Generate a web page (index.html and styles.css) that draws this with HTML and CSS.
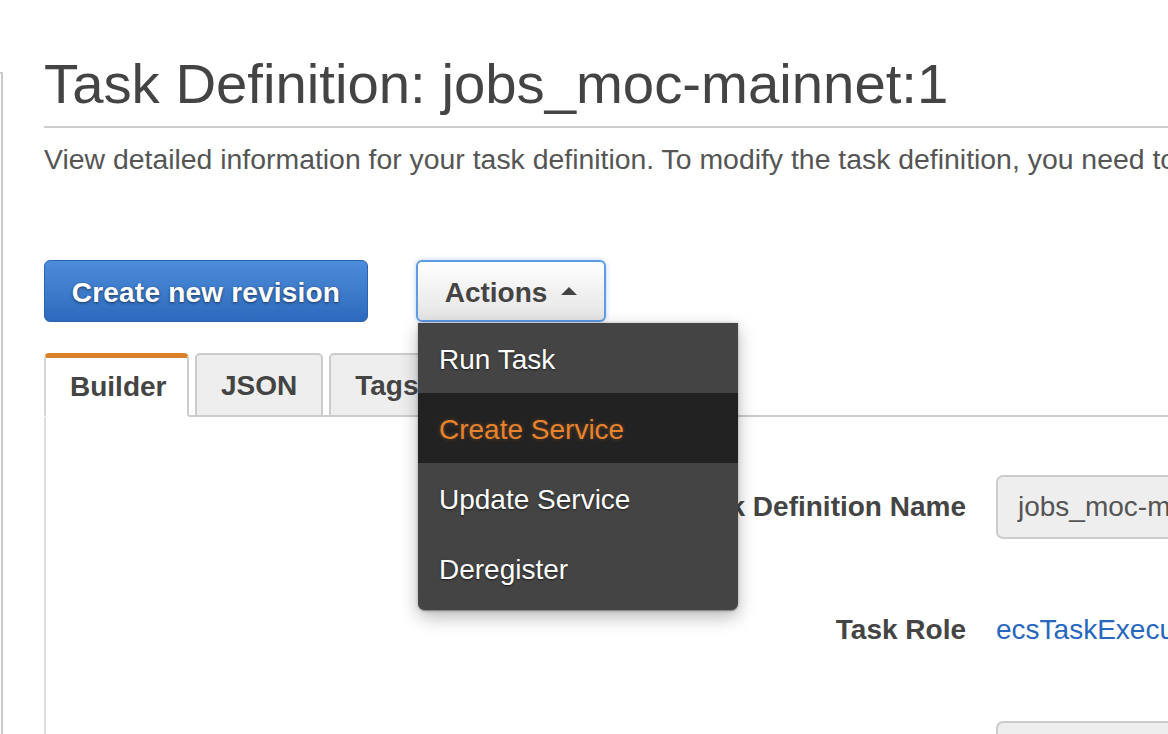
FILE: index.html
```html
<!DOCTYPE html>
<html lang="en">
<head>
<meta charset="utf-8">
<title>Task Definition</title>
<link rel="stylesheet" href="styles.css">
</head>
<body>
<div class="page">
  <div class="rail"></div>
  <main class="main">
    <h1 class="title">Task Definition: jobs_moc-mainnet:1</h1>
    <hr class="rule">
    <p class="subtitle">View detailed information for your task definition. To modify the task definition, you need to create a new revision.</p>

    <div class="actions-row">
      <button class="btn btn-primary">Create new revision</button>
      <div class="dropdown">
        <button class="btn btn-default">Actions <span class="caret-up"></span></button>
        <ul class="menu">
          <li class="menu-item">Run Task</li>
          <li class="menu-item is-hover">Create Service</li>
          <li class="menu-item">Update Service</li>
          <li class="menu-item">Deregister</li>
        </ul>
      </div>
    </div>

    <div class="tabs">
      <div class="tab is-active">Builder</div>
      <div class="tab">JSON</div>
      <div class="tab">Tags</div>
    </div>

    <section class="panel">
      <div class="form-grid">
        <div class="label">Task Definition Name</div>
        <div class="value"><div class="field">jobs_moc-mainnet</div></div>
        <div class="label">Task Role</div>
        <div class="value"><a class="link" href="#">ecsTaskExecutionRole</a></div>
        <div class="label"></div>
        <div class="value"><div class="field"></div></div>
      </div>
    </section>
  </main>
</div>
</body>
</html>
```

FILE: styles.css
```css
html, body {
  margin: 0;
  padding: 0;
  background: #fff;
  overflow: hidden;
  width: 1168px;
  height: 734px;
}

body {
  font-family: "Liberation Sans", Arial, Helvetica, sans-serif;
  color: #444;
}

.page {
  display: flex;
  align-items: flex-start;
  height: 734px;
}

.rail {
  flex: 0 0 auto;
  width: 1px;
  margin-top: 72px;
  height: 700px;
  border-top: 2px solid #cfcfcf;
  border-right: 2px solid #c8c8c8;
}

.main {
  flex: 1 1 auto;
  min-width: 0;
  padding-left: 41px;
}

.title {
  margin: 52px 0 0;
  font-size: 56.3px;
  line-height: 1.15;
  font-weight: normal;
  color: #444;
  white-space: nowrap;
}

.rule {
  margin: 9px 0 0;
  border: 0;
  height: 2px;
  background: #cccccc;
}

.subtitle {
  margin: 14px 0 0;
  font-size: 28.4px;
  line-height: 1.2;
  color: #555;
  white-space: nowrap;
}

.actions-row {
  display: flex;
  gap: 48px;
  margin-top: 84px;
}

.btn {
  font-family: "Liberation Sans", Arial, Helvetica, sans-serif;
  font-size: 28px;
  font-weight: bold;
  height: 62px;
  box-sizing: border-box;
  border-radius: 6px;
  padding: 5px 0 0;
  cursor: pointer;
}

.btn-primary {
  width: 324px;
  color: #fff;
  background: linear-gradient(#4d8cda, #2d6abd);
  border: 1px solid #2b63b0;
  text-shadow: 0 1px 3px rgba(0, 0, 0, 0.55);
  letter-spacing: 0.2px;
}

.dropdown {
  position: relative;
}

.btn-default {
  width: 190px;
  color: #444;
  background: linear-gradient(#ffffff, #e4e4e4);
  border: 2px solid #5d9be2;
  box-shadow: 0 0 5px rgba(90, 150, 230, 0.45);
  display: flex;
  align-items: center;
  justify-content: center;
  gap: 14px;
}

.caret-up {
  display: inline-block;
  width: 0;
  height: 0;
  border-left: 8px solid transparent;
  border-right: 8px solid transparent;
  border-bottom: 8px solid #444;
  margin-top: -4px;
}

.menu {
  position: absolute;
  top: 63px;
  left: 2px;
  width: 320px;
  margin: 0;
  padding: 0 0 7px;
  list-style: none;
  background: #444444;
  border-radius: 0 0 7px 7px;
  border-bottom: 1px solid #8a8a8a;
  box-shadow: 0 6px 18px rgba(0, 0, 0, 0.28), 0 0 3px rgba(0, 0, 0, 0.25);
  z-index: 10;
}

.menu-item {
  height: 70px;
  box-sizing: border-box;
  padding: 3px 0 0 21px;
  line-height: 67px;
  font-size: 28px;
  color: #fff;
  text-shadow: 0 1px 2px rgba(0, 0, 0, 0.6);
}

.menu-item.is-hover {
  background: #222222;
  color: #e7832d;
  text-shadow: 0 0 4px rgba(231, 131, 45, 0.35);
}

.tabs {
  display: flex;
  gap: 6px;
  margin-top: 31px;
  height: 64px;
  border-bottom: 2px solid #cccccc;
  box-sizing: border-box;
}

.tab {
  height: 64px;
  box-sizing: border-box;
  padding: 1px 24px 0;
  font-size: 28px;
  font-weight: bold;
  line-height: 60px;
  color: #444;
  background: #eeeeee;
  border: 2px solid #cccccc;
  border-radius: 5px 5px 0 0;
}

.tab.is-active {
  background: #fff;
  border-top: 5px solid #d9822b;
  border-left: 2px solid #d6d6d6;
  border-bottom-color: #fff;
  line-height: 58px;
  width: 145px;
  padding: 0 0 0 24px;
}

.panel {
  border-left: 2px solid #dddddd;
  height: 330px;
  padding-top: 58px;
  box-sizing: border-box;
}

.form-grid {
  display: grid;
  grid-template-columns: 920px 500px;
  grid-auto-rows: 64px;
  column-gap: 30px;
  row-gap: 59px;
}

.label {
  font-size: 28px;
  font-weight: bold;
  color: #444;
  text-align: right;
  display: flex;
  align-items: center;
  justify-content: flex-end;
  padding-top: 1px;
}

.value {
  display: flex;
  align-items: center;
}

.field {
  width: 100%;
  height: 64px;
  box-sizing: border-box;
  border: 2px solid #cccccc;
  border-radius: 7px;
  background: #eeeeee;
  padding: 1px 0 0 20px;
  font-size: 28px;
  line-height: 57px;
  color: #555;
  white-space: nowrap;
}

.link {
  font-size: 28px;
  color: #2767bd;
  text-decoration: none;
  white-space: nowrap;
  padding-top: 1px;
}
```
